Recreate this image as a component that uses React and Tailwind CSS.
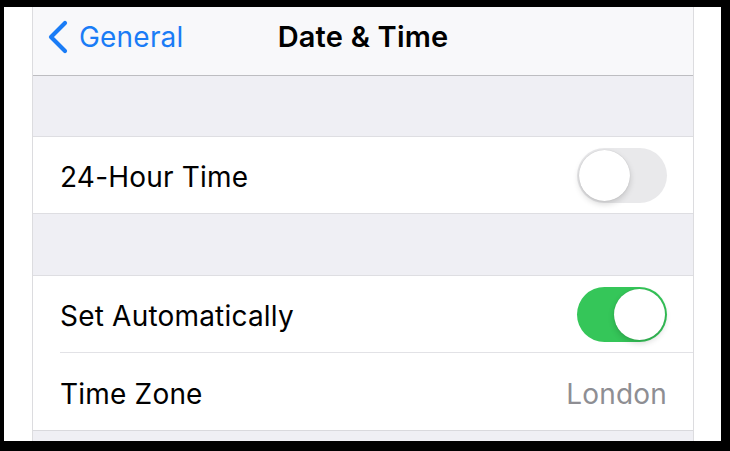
import React from 'react';

function Toggle({ on }) {
  return (
    <div
      className={`relative w-[90px] h-[55px] rounded-full ${on ? 'bg-[#35c659]' : 'bg-[#e9e9eb]'}`}
    >
      <div
        className={`absolute top-[2px] w-[51px] h-[51px] rounded-full bg-white shadow-[0_3px_6px_rgba(0,0,0,0.16),0_0_1px_rgba(0,0,0,0.2)] ${on ? 'left-[37px]' : 'left-[2px]'}`}
      />
    </div>
  );
}

function Label({ children, muted }) {
  return (
    <span className={`pt-[4px] text-[28px] tracking-[0.2px] ${muted ? 'text-[#8e8e93]' : 'text-black'}`}>
      {children}
    </span>
  );
}

export default function App() {
  return (
    <div
      className="w-[730px] h-[451px] bg-black pt-[7px] pl-[4px] pr-[9px] pb-[10px]"
      style={{ fontFamily: 'Inter, "Liberation Sans", sans-serif' }}
    >
      <div className="h-full bg-white flex pl-[28px] pr-[27px]">
        <div className="flex-1 flex flex-col border-x border-[#dcdcdf] bg-[#efeff4]">
          {/* Navigation bar */}
          <div className="h-[69px] pb-[8px] bg-[#f8f8fa] border-b border-[#bdbdc1] relative flex items-center justify-center">
            <div className="absolute left-[14px] top-0 h-full pb-[8px] flex items-center">
              <svg width="22" height="34" viewBox="0 0 22 34" fill="none">
                <path
                  d="M18 3 L4 17 L18 31"
                  stroke="#1a7cf6"
                  strokeWidth="4.2"
                  strokeLinecap="round"
                  strokeLinejoin="round"
                />
              </svg>
              <span className="ml-[10px] text-[28px] text-[#1a7cf6] tracking-[0.2px]">General</span>
            </div>
            <span className="text-[29px] font-semibold text-black tracking-[0.2px]">Date &amp; Time</span>
          </div>

          <div className="h-[61px] border-b border-[#dedee2]" />

          <div className="h-[77px] flex items-center justify-between bg-white border-b border-[#dedee2] pl-[27px] pr-[26px]">
            <Label>24-Hour Time</Label>
            <Toggle on={false} />
          </div>

          <div className="h-[62px] border-b border-[#dedee2]" />

          <div className="h-[77px] flex bg-white">
            <div className="flex-1 flex items-center justify-between ml-[27px] pr-[26px] border-b border-[#e2e2e6]">
              <Label>Set Automatically</Label>
              <Toggle on />
            </div>
          </div>
          <div className="h-[78px] flex items-center justify-between bg-white border-b border-[#d9d9dd] pl-[27px] pr-[26px]">
            <Label>Time Zone</Label>
            <Label muted>London</Label>
          </div>
        </div>
      </div>
    </div>
  );
}
